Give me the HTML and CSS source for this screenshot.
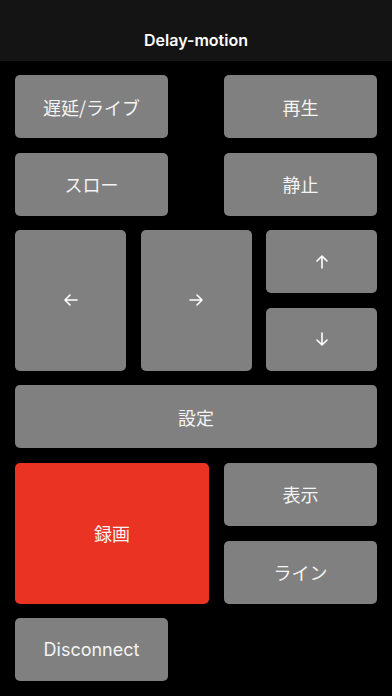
FILE: index.html
```html
<!DOCTYPE html>
<html lang="ja">
<head>
<meta charset="utf-8">
<title>Delay-motion</title>
<link rel="stylesheet" href="styles.css">
</head>
<body>
<header class="navbar">
  <h1 class="title">Delay-motion</h1>
</header>
<main class="panel">
  <div class="pair">
    <button class="btn half">遅延/ライブ</button>
    <button class="btn half">再生</button>
  </div>
  <div class="pair">
    <button class="btn half">スロー</button>
    <button class="btn half">静止</button>
  </div>
  <div class="dpad">
    <button class="btn tall" aria-label="left">
      <svg class="arrow" viewBox="0 0 14 12" width="14" height="12"><path d="M13 6H1M6 1L1 6l5 5"/></svg>
    </button>
    <button class="btn tall" aria-label="right">
      <svg class="arrow" viewBox="0 0 14 12" width="14" height="12"><path d="M1 6h12M8 1l5 5-5 5"/></svg>
    </button>
    <button class="btn" aria-label="up">
      <svg class="arrow" viewBox="0 0 12 14" width="12" height="14"><path d="M6 13V1M1 6l5-5 5 5"/></svg>
    </button>
    <button class="btn" aria-label="down">
      <svg class="arrow" viewBox="0 0 12 14" width="12" height="14"><path d="M6 1v12M1 8l5 5 5-5"/></svg>
    </button>
  </div>
  <button class="btn full">設定</button>
  <div class="rec-block">
    <button class="btn rec">録画</button>
    <button class="btn">表示</button>
    <button class="btn">ライン</button>
  </div>
  <div class="pair">
    <button class="btn half latin">Disconnect</button>
  </div>
</main>
</body>
</html>
```
FILE: styles.css
```css
* { box-sizing: border-box; }
html, body {
  margin: 0;
  padding: 0;
  background: #000;
  width: 392px;
  height: 696px;
  overflow: hidden;
  font-family: Inter, "Noto Sans CJK JP", sans-serif;
}
.navbar {
  height: 61px;
  background: #141414;
  display: flex;
  align-items: flex-end;
  justify-content: center;
  padding-bottom: 11px;
}
.title {
  margin: 0;
  color: #fff;
  font-size: 16px;
  font-weight: 600;
  line-height: 19px;
  letter-spacing: 0;
}
.panel {
  padding: 14px 15px 0;
  display: flex;
  flex-direction: column;
  gap: 14.6px;
}
.btn {
  border: none;
  margin: 0;
  padding: 0;
  height: 63px;
  background: #808080;
  border-radius: 5px;
  color: #f4f4f4;
  font-family: "Noto Sans CJK JP", Inter, sans-serif;
  font-size: 18px;
  font-weight: 400;
  display: flex;
  align-items: center;
  justify-content: center;
}
.latin { font-family: Inter, "Noto Sans CJK JP", sans-serif; font-size: 18px; }
.pair {
  display: flex;
  justify-content: space-between;
}
.half { width: 153px; }
.dpad {
  display: grid;
  grid-template-columns: 1fr 1fr 1fr;
  grid-template-rows: 63px 63px;
  column-gap: 14.5px;
  row-gap: 14.6px;
}
.dpad .btn { height: auto; }
.tall { grid-row: span 2; }
.full { width: 100%; }
.rec-block {
  display: grid;
  grid-template-columns: 194px 153px;
  grid-template-rows: 63px 63px;
  column-gap: 15px;
  row-gap: 14.6px;
}
.rec-block .btn { height: auto; }
.rec {
  grid-row: span 2;
  background: #ea3323;
}
.arrow {
  fill: none;
  stroke: #fff;
  stroke-width: 1.6;
  stroke-linecap: round;
  stroke-linejoin: round;
}
```
